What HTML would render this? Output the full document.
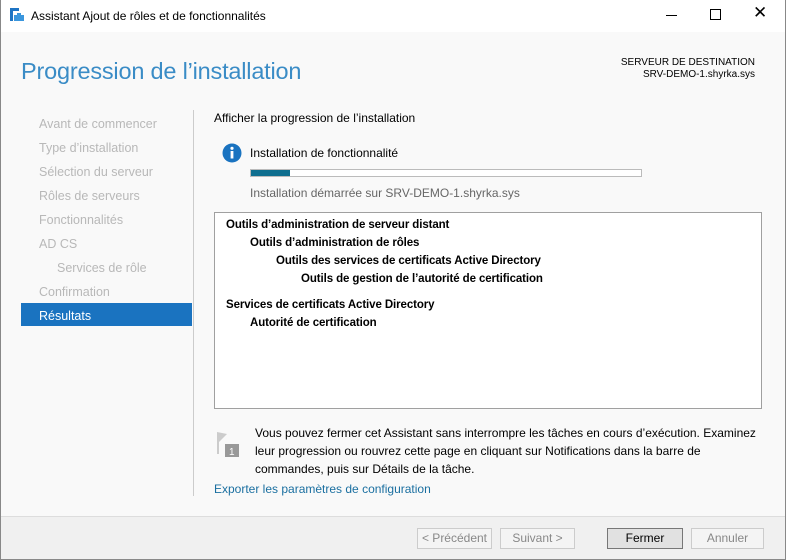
<!DOCTYPE html>
<html><head><meta charset="utf-8"><style>
*{margin:0;padding:0;box-sizing:border-box}
body{width:786px;height:560px;overflow:hidden;font-family:"Liberation Sans",sans-serif;font-size:12px;color:#000;background:#f9f9f9;position:relative}
.a{position:absolute;white-space:nowrap}
.tb{left:0;top:0;width:786px;height:32px;background:#fff}
.nav{color:#b8b8b8;font-size:12.5px}
.bd{font-weight:bold;font-size:11.5px;letter-spacing:-0.1px}
.btn{position:absolute;top:528px;height:21px;border:1px solid #ccc;background:#f4f4f4;color:#888;font-size:12px;text-align:center;line-height:19px}
</style></head><body>
<div class="a tb"></div>
<svg class="a" style="left:9px;top:7px" width="16" height="16"><rect x="1" y="1" width="3" height="13" fill="#1e74c4"/><rect x="4" y="1" width="6" height="3" fill="#1e74c4"/><rect x="5" y="8" width="10" height="6" fill="#3a96dd"/><rect x="8" y="6" width="4" height="2" fill="#3a96dd"/></svg>
<div class="a" style="left:31px;top:9px;font-size:12px">Assistant Ajout de rôles et de fonctionnalités</div>
<div class="a" style="left:666px;top:15px;width:11px;height:1px;background:#000"></div>
<div class="a" style="left:710px;top:9px;width:11px;height:11px;border:1px solid #000"></div>
<div class="a" style="left:753px;top:3px;font-size:17px">✕</div>
<div class="a" style="left:21px;top:58px;font-size:23.5px;color:#3a8cc6;letter-spacing:-0.2px">Progression de l’installation</div>
<div class="a" style="right:31px;top:57px;font-size:10px;text-align:right;line-height:12px">SERVEUR DE DESTINATION<br>SRV-DEMO-1.shyrka.sys</div>
<div class="a nav" style="left:39px;top:117px">Avant de commencer</div>
<div class="a nav" style="left:39px;top:141px">Type d’installation</div>
<div class="a nav" style="left:39px;top:165px">Sélection du serveur</div>
<div class="a nav" style="left:39px;top:189px">Rôles de serveurs</div>
<div class="a nav" style="left:39px;top:213px">Fonctionnalités</div>
<div class="a nav" style="left:39px;top:237px">AD CS</div>
<div class="a nav" style="left:57px;top:261px">Services de rôle</div>
<div class="a nav" style="left:39px;top:285px">Confirmation</div>
<div class="a" style="left:21px;top:303px;width:171px;height:23px;background:#1a73c0"></div>
<div class="a" style="left:39px;top:309px;color:#fff;font-size:12.5px">Résultats</div>
<div class="a" style="left:193px;top:110px;width:1px;height:386px;background:#ccc"></div>
<div class="a" style="left:214px;top:111px">Afficher la progression de l’installation</div>
<svg class="a" style="left:222px;top:143px" width="20" height="20"><circle cx="10" cy="10" r="9.5" fill="#1a73c0"/><rect x="8.6" y="8" width="2.8" height="7.5" fill="#fff"/><circle cx="10" cy="5.3" r="1.6" fill="#fff"/></svg>
<div class="a" style="left:250px;top:146px">Installation de fonctionnalité</div>
<div class="a" style="left:250px;top:169px;width:392px;height:8px;border:1px solid #bbb;background:#fff"></div>
<div class="a" style="left:251px;top:170px;width:39px;height:6px;background:#0e6e8f"></div>
<div class="a" style="left:250px;top:186px;color:#666">Installation démarrée sur SRV-DEMO-1.shyrka.sys</div>
<div class="a" style="left:214px;top:212px;width:548px;height:197px;border:1px solid #a0a0a0;background:#fff"></div>
<div class="a bd" style="left:226px;top:219px">Outils d’administration de serveur distant</div>
<div class="a bd" style="left:250px;top:237px">Outils d’administration de rôles</div>
<div class="a bd" style="left:276px;top:255px">Outils des services de certificats Active Directory</div>
<div class="a bd" style="left:301px;top:273px">Outils de gestion de l’autorité de certification</div>
<div class="a bd" style="left:226px;top:299px">Services de certificats Active Directory</div>
<div class="a bd" style="left:250px;top:317px">Autorité de certification</div>
<svg class="a" style="left:216px;top:432px" width="26" height="26"><path d="M1 0v22h2V10l8-8z" fill="#ccc"/><rect x="9" y="12" width="14" height="13" fill="#999"/><text x="13" y="23" font-size="10" fill="#fff" font-family="Liberation Sans">1</text></svg>
<div class="a" style="left:255px;top:424px;line-height:18px">Vous pouvez fermer cet Assistant sans interrompre les tâches en cours d’exécution. Examinez<br>leur progression ou rouvrez cette page en cliquant sur Notifications dans la barre de<br>commandes, puis sur Détails de la tâche.</div>
<div class="a" style="left:214px;top:482px;color:#1a6fa0">Exporter les paramètres de configuration</div>
<div class="a" style="left:0;top:516px;width:786px;height:44px;background:#f0f0f0;border-top:1px solid #ddd"></div>
<div class="btn" style="left:417px;width:75px">&lt; Précédent</div>
<div class="btn" style="left:500px;width:75px">Suivant &gt;</div>
<div class="btn" style="left:607px;width:76px;border-color:#777;background:#e1e1e1;color:#000">Fermer</div>
<div class="btn" style="left:691px;width:73px">Annuler</div>
<div class="a" style="left:0;top:0;width:786px;height:560px;border:1px solid #888;border-top:none"></div>
</body></html>
